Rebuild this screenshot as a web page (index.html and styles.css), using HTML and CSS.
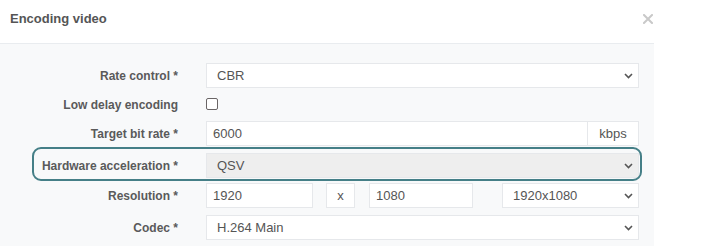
FILE: index.html
```html
<!DOCTYPE html>
<html lang="en">
<head>
    <meta charset="UTF-8">
    <meta name="viewport" content="width=device-width, initial-scale=1.0">
    <title>Encoding video</title>
    <link rel="stylesheet" href="styles.css">
</head>
<body>
    <div class="modal">
        <div class="modal-header">
            <h4 class="modal-title">Encoding video</h4>
            <button class="close" type="button" aria-label="Close">
                <svg width="10" height="10" viewBox="0 0 10 10">
                    <path d="M1 1 L9 9 M9 1 L1 9" stroke="#c9c9c9" stroke-width="2" stroke-linecap="square"/>
                </svg>
            </button>
        </div>
        <div class="modal-body">
            <div class="form-row">
                <label class="form-label">Rate control *</label>
                <div class="form-field">
                    <select class="form-control">
                        <option>CBR</option>
                        <option>VBR</option>
                    </select>
                </div>
            </div>
            <div class="form-row check-row">
                <label class="form-label">Low delay encoding</label>
                <div class="form-field">
                    <input type="checkbox" class="check">
                </div>
            </div>
            <div class="form-row">
                <label class="form-label">Target bit rate *</label>
                <div class="form-field input-group">
                    <input type="text" class="form-control" value="6000">
                    <span class="addon">kbps</span>
                </div>
            </div>
            <div class="form-row highlight">
                <label class="form-label">Hardware acceleration *</label>
                <div class="form-field">
                    <select class="form-control" disabled>
                        <option>QSV</option>
                    </select>
                </div>
            </div>
            <div class="form-row">
                <label class="form-label">Resolution *</label>
                <div class="form-field resolution">
                    <input type="text" class="form-control res-w" value="1920">
                    <span class="addon res-x">x</span>
                    <input type="text" class="form-control res-h" value="1080">
                    <select class="form-control res-preset">
                        <option>1920x1080</option>
                        <option>1280x720</option>
                    </select>
                </div>
            </div>
            <div class="form-row">
                <label class="form-label">Codec *</label>
                <div class="form-field">
                    <select class="form-control">
                        <option>H.264 Main</option>
                        <option>H.264 High</option>
                    </select>
                </div>
            </div>
            <div class="form-row">
                <label class="form-label"></label>
                <div class="form-field">
                    <div class="form-control"></div>
                </div>
            </div>
        </div>
    </div>
</body>
</html>
```

FILE: styles.css
```css
body {
    margin: 0;
    padding: 0;
    background-color: #ffffff;
    font-family: 'Liberation Sans', Arial, sans-serif;
    color: #555;
}
.modal {
    width: 654px;
}
.modal-header {
    height: 43px;
    display: flex;
    justify-content: space-between;
    align-items: flex-start;
    padding: 0 0 0 10px;
    border-bottom: 1px solid #e9ecef;
    box-sizing: content-box;
}
.modal-title {
    margin: 11px 0 0 0;
    font-size: 13px;
    line-height: 16px;
    font-weight: bold;
    color: #555;
}
.close {
    margin: 14px 1px 0 0;
    padding: 0;
    border: none;
    background: none;
    width: 10px;
    height: 10px;
    line-height: 0;
    cursor: pointer;
}
.modal-body {
    background-color: #f8f9fa;
    padding: 19px 15px 20px 0;
}
.form-row {
    position: relative;
    display: flex;
    align-items: center;
    margin-bottom: 7px;
}
.form-label {
    width: 178px;
    margin-right: 28px;
    text-align: right;
    font-size: 12px;
    font-weight: bold;
    color: #5a5a5a;
    flex-shrink: 0;
}
.form-field {
    flex: 1;
    display: flex;
}
.form-control {
    box-sizing: border-box;
    height: 25px;
    width: 100%;
    margin: 0;
    padding: 0 6px;
    font-family: 'Liberation Sans', Arial, sans-serif;
    font-size: 13px;
    color: #555;
    background-color: #fff;
    border: 1px solid #e6e8eb;
    border-radius: 0;
    outline: none;
}
select.form-control {
    -webkit-appearance: none;
    appearance: none;
    padding-left: 10px;
    background-image: url("data:image/svg+xml,%3Csvg xmlns='http://www.w3.org/2000/svg' width='9' height='6' viewBox='0 0 9 6'%3E%3Cpath d='M1 1 L4.5 4.5 L8 1' fill='none' stroke='%23555' stroke-width='1.6'/%3E%3C/svg%3E");
    background-repeat: no-repeat;
    background-position: right 5px center;
}
select.form-control:disabled {
    background-color: #eeeeee;
    color: #555;
    opacity: 1;
}
.check-row {
    height: 19px;
}
.check {
    -webkit-appearance: none;
    appearance: none;
    box-sizing: border-box;
    width: 12px;
    height: 12px;
    margin: 0;
    border: 1.5px solid #6a6566;
    border-radius: 2px;
    background: #fff;
    position: relative;
    top: -1px;
}
.input-group .form-control {
    flex: 1;
    border-right: none;
}
.addon {
    box-sizing: border-box;
    height: 25px;
    display: flex;
    align-items: center;
    justify-content: center;
    font-size: 13px;
    color: #555;
    background-color: #fff;
    border: 1px solid #e6e8eb;
}
.input-group .addon {
    width: 52px;
}
.highlight {
    margin-top: 0;
    margin-bottom: 5px;
}
.highlight::after {
    content: '';
    position: absolute;
    left: 32px;
    right: -3px;
    top: -6px;
    bottom: -3px;
    border: 2px solid #457f87;
    border-radius: 9px;
    pointer-events: none;
}
.resolution .res-w {
    width: 107px;
}
.resolution .res-x {
    width: 29px;
    margin-left: 13px;
}
.resolution .res-h {
    width: 104px;
    margin-left: 14px;
}
.resolution .res-preset {
    width: 137px;
    margin-left: 29px;
}
```
